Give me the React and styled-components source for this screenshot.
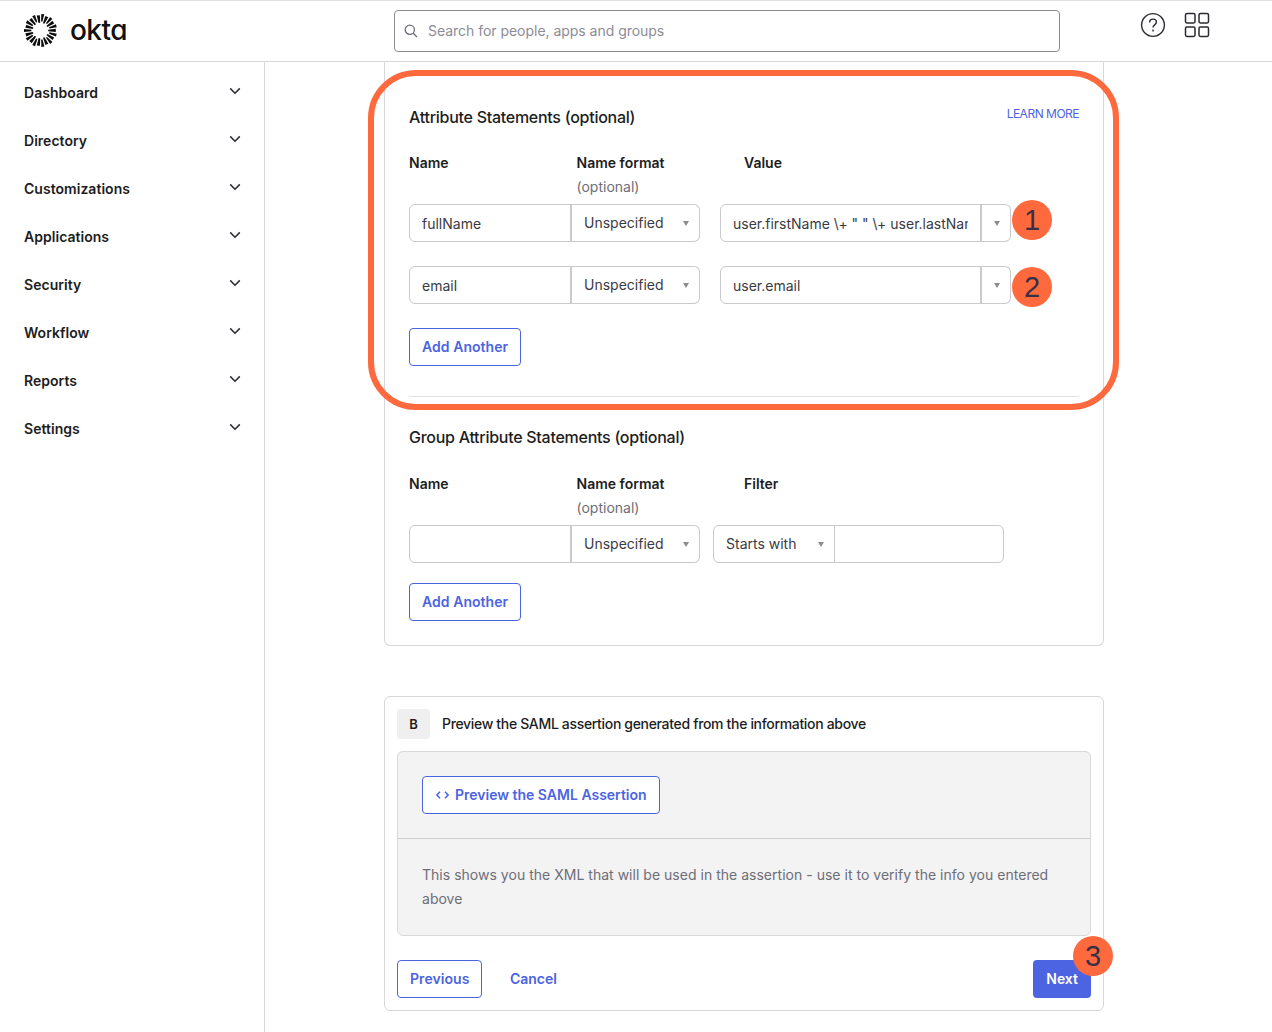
import React from "react";
import styled, { createGlobalStyle } from "styled-components";

const Global = createGlobalStyle`
  html, body { margin: 0; padding: 0; background: #fff; }
  body { font-family: Inter, "Liberation Sans", sans-serif; color: #1d1d21; font-size: 14px; overflow: hidden; }
  * { box-sizing: border-box; }
`;

const Page = styled.div`
  position: relative;
  width: 1272px;
  height: 1032px;
  overflow: hidden;
  border-top: 1px solid #e1e1e1;
`;
const Header = styled.header`
  height: 61px;
  border-bottom: 1px solid #d7d7dc;
  display: flex;
  align-items: center;
  position: relative;
`;
const Brand = styled.div`
  width: 394px;
  padding-left: 24px;
  display: flex;
  align-items: center;
  gap: 13px;
  margin-top: -1px;
`;
const Wordmark = styled.span`
  font-family: Inter, sans-serif;
  font-size: 28px;
  font-weight: 500;
  letter-spacing: -0.55px;
  color: #111;
  line-height: 30px;
  margin-top: -2px;
  font-feature-settings: "cv11";
`;
const SearchBox = styled.div`
  width: 666px;
  height: 42px;
  border: 1px solid #8c8c96;
  border-radius: 4px;
  display: flex;
  align-items: center;
  padding-left: 9px;
  gap: 10px;
  color: #8c8c96;
  font-size: 14px;
  letter-spacing: -0.03px;
  span { margin-top: -2px; }
`;
const HeaderIcons = styled.div`
  display: flex;
  align-items: center;
  gap: 18px;
  margin-left: 80px;
  margin-top: -12px;
`;
const Body = styled.div`
  display: flex;
  height: 970px;
`;
const Sidebar = styled.nav`
  width: 265px;
  flex: none;
  border-right: 1px solid #d7d7dc;
  padding: 6px 23px 0 24px;
`;
const NavItem = styled.div`
  height: 48px;
  display: flex;
  align-items: center;
  justify-content: space-between;
  font-size: 14px;
  font-weight: 600;
  letter-spacing: 0.03px;
  color: #1d1d21;
  svg { margin-top: -2px; }
`;
const Main = styled.main`
  flex: 1;
  padding-left: 119px;
  width: 720px;
`;
const TopCard = styled.section`
  width: 720px;
  height: 584px;
  border: 1px solid #d7d7dc;
  border-top: none;
  border-radius: 0 0 6px 6px;
  padding: 0 24px;
  position: relative;
`;
const SectionHead = styled.div`
  display: flex;
  justify-content: space-between;
  align-items: flex-start;
  padding-top: ${(p) => p.$top}px;
`;
const SectionTitle = styled.h2`
  margin: 0;
  font-size: 16px;
  line-height: 20px;
  font-weight: 550;
  letter-spacing: -0.27px;
  color: #1d1d21;
`;
const LearnMore = styled.a`
  margin-top: -1px;
  font-size: 12px;
  line-height: 16px;
  letter-spacing: -0.5px;
  color: #4c64e1;
`;
const Labels = styled.div`
  display: grid;
  grid-template-columns: 167.5px 167.5px 1fr;
  margin-top: ${(p) => p.$top}px;
  height: 51px;
  font-size: 14px;
  line-height: 20px;
  font-weight: 600;
  color: #1d1d21;
`;
const Opt = styled.div`
  margin-top: 4px;
  font-weight: 400;
  color: #6e6e78;
`;
const Row = styled.div`
  display: flex;
  height: 38px;
  margin-top: ${(p) => p.$top}px;
`;
const Field = styled.div`
  width: ${(p) => p.$w}px;
  height: 38px;
  flex: none;
  background: #fff;
  border: 1px solid #c9c9ce;
  border-radius: ${(p) => p.$r};
  margin-left: ${(p) => p.$ml || 0}px;
  padding: 1px 0 0 12px;
  display: flex;
  align-items: center;
  justify-content: space-between;
  font-size: 14px;
  line-height: 20px;
  color: #3a3a42;
  overflow: hidden;
  white-space: nowrap;
`;
const SelectField = styled(Field)`
  padding-top: 0;
  border-left-width: ${(p) => p.$lw || 1}px;
`;
const Clip = styled.span`
  display: block;
  width: ${(p) => p.$w}px;
  overflow: hidden;
`;
const Caret = styled.i`
  width: 0;
  height: 0;
  margin-right: ${(p) => p.$mr}px;
  margin-left: ${(p) => p.$ml || 0}px;
  margin-top: 1px;
  border-left: 3.5px solid transparent;
  border-right: 3.5px solid transparent;
  border-top: 5px solid #8c8c8c;
`;
const SelectText = styled.span`
  margin-top: -1px;
`;
const CaretBox = styled.div`
  width: 31px;
  height: 38px;
  flex: none;
  border: 1px solid #c9c9ce;
  border-left-width: 2px;
  border-radius: 0 6px 6px 0;
  margin-left: -1px;
  display: flex;
  align-items: center;
  justify-content: center;
`;
const OutlineButton = styled.button`
  height: 38px;
  padding: 0 12px;
  margin-top: ${(p) => p.$top || 0}px;
  display: inline-flex;
  align-items: center;
  gap: 6px;
  background: #fff;
  border: 1px solid #4c64e1;
  border-radius: 4px;
  color: #4c64e1;
  font: 600 14px/20px Inter, sans-serif;
  letter-spacing: 0.05px;
`;
const PreviewButton = styled(OutlineButton)`
  padding: 0 12px 0 13px;
  letter-spacing: 0;
`;
const Divider = styled.div`
  height: 1px;
  background: #e1e1e4;
  margin-top: 30px;
`;
const SecondCard = styled.section`
  width: 720px;
  height: 315px;
  margin-top: 50px;
  border: 1px solid #d7d7dc;
  border-radius: 6px;
  padding: 12px;
`;
const StepHead = styled.div`
  display: flex;
  align-items: center;
  gap: 12px;
  height: 30px;
`;
const StepBadge = styled.div`
  width: 33px;
  height: 30px;
  background: #efefef;
  border-radius: 4px;
  display: flex;
  align-items: center;
  justify-content: center;
  font-weight: 600;
  font-size: 13px;
`;
const StepTitle = styled.div`
  font-size: 14px;
  font-weight: 550;
  letter-spacing: -0.33px;
  margin-top: -2px;
  color: #1d1d21;
`;
const Panel = styled.div`
  margin-top: 12px;
  height: 185px;
  background: #f3f3f3;
  border: 1px solid #d7d7dc;
  border-radius: 6px;
`;
const PanelTop = styled.div`
  height: 87px;
  padding: 24px;
  border-bottom: 1px solid #d0d0d4;
`;
const PanelText = styled.p`
  margin: 0;
  padding: 24px 24px 0;
  font-size: 14px;
  line-height: 24px;
  letter-spacing: 0.02px;
  color: #6e6e78;
`;
const Footer = styled.div`
  display: flex;
  align-items: center;
  margin-top: 24px;
`;
const TextLink = styled.a`
  margin: -2px 0 0 27.5px;
  font-weight: 600;
  font-size: 14px;
  color: #4c64e1;
`;
const Primary = styled.button`
  margin-left: auto;
  height: 38px;
  padding: 0 13px;
  border: none;
  border-radius: 4px;
  background: #4c64e1;
  color: #fff;
  font: 600 14px/20px Inter, sans-serif;
`;
const Highlight = styled.div`
  position: absolute;
  left: 368px;
  top: 69px;
  width: 751px;
  height: 340px;
  border: 6px solid #ff693e;
  border-radius: 48px;
  pointer-events: none;
`;
const Marker = styled.div`
  position: absolute;
  left: ${(p) => p.$x}px;
  top: ${(p) => p.$y}px;
  width: 40px;
  height: 40px;
  border-radius: 50%;
  background: #ff693e;
  color: #3a3045;
  font: 400 29px/40px "Liberation Sans", sans-serif;
  text-align: center;
`;

const rays = Array.from({ length: 22 }, (_, i) => (i * 360) / 22);
const OktaMark = () => (
  <svg width="33" height="33" viewBox="0 0 33 33" aria-hidden="true">
    {rays.map((a, i) => (
      <path
        key={a}
        d={i % 2 ? "M14.9 1.2h3.2l-.8 7.6h-1.6z" : "M15 0h3l-.8 7.4h-1.4z"}
        fill="#0c0c0c"
        transform={`rotate(${a + 8} 16.5 16.5)`}
      />
    ))}
  </svg>
);
const SearchIcon = () => (
  <svg width="14" height="14" viewBox="0 0 14 14" fill="none" stroke="#6e6e78" strokeWidth="1.3">
    <circle cx="5.8" cy="5.8" r="4.6" />
    <path d="M9.2 9.2 13 13" />
  </svg>
);
const HelpIcon = () => (
  <svg width="26" height="26" viewBox="0 0 26 26" fill="none" stroke="#2a2a30" strokeWidth="1.4">
    <circle cx="13" cy="13" r="11.4" />
    <path d="M9.6 10.4c0-2 1.5-3.3 3.4-3.3s3.4 1.2 3.4 3c0 2.8-3.4 2.7-3.4 5.4" />
    <path d="M13 17.6v1.8" />
  </svg>
);
const GridIcon = () => (
  <svg width="26" height="26" viewBox="0 0 26 26" fill="none" stroke="#2a2a30" strokeWidth="1.5">
    <rect x="1.5" y="1.5" width="9.5" height="9.5" rx="1.4" />
    <rect x="15" y="1.5" width="9.5" height="9.5" rx="1.4" />
    <rect x="1.5" y="15" width="9.5" height="9.5" rx="1.4" />
    <rect x="15" y="15" width="9.5" height="9.5" rx="1.4" />
  </svg>
);
const Chevron = () => (
  <svg width="12" height="8" viewBox="0 0 12 8" fill="none" stroke="#2a2a30" strokeWidth="1.5">
    <path d="M1.2 1.4 6 6.2l4.8-4.8" />
  </svg>
);
const CodeIcon = () => (
  <svg width="13" height="8" viewBox="0 0 13 8" fill="none" stroke="#4c64e1" strokeWidth="1.5">
    <path d="M4 .8.9 4 4 7.2M9 .8 12.1 4 9 7.2" />
  </svg>
);

const NAV = ["Dashboard", "Directory", "Customizations", "Applications", "Security", "Workflow", "Reports", "Settings"];

const NameFormat = ({ value }) => (
  <SelectField $w={130} $ml={-1} $lw={2} $r="0 6px 6px 0">
    <SelectText>{value}</SelectText>
    <Caret $mr={10} />
  </SelectField>
);

export default function App() {
  return (
    <Page>
      <Global />
      <Header>
        <Brand>
          <OktaMark />
          <Wordmark>okta</Wordmark>
        </Brand>
        <SearchBox>
          <SearchIcon />
          <span>Search for people, apps and groups</span>
        </SearchBox>
        <HeaderIcons>
          <HelpIcon />
          <GridIcon />
        </HeaderIcons>
      </Header>
      <Body>
        <Sidebar>
          {NAV.map((n) => (
            <NavItem key={n}>
              {n}
              <Chevron />
            </NavItem>
          ))}
        </Sidebar>
        <Main>
          <TopCard>
            <SectionHead $top={45}>
              <SectionTitle>Attribute Statements (optional)</SectionTitle>
              <LearnMore>LEARN MORE</LearnMore>
            </SectionHead>
            <Labels $top={26}>
              <span>Name</span>
              <div>
                Name format
                <Opt>(optional)</Opt>
              </div>
              <span>Value</span>
            </Labels>
            <Row $top={0}>
              <Field $w={162} $r="6px 0 0 6px">fullName</Field>
              <NameFormat value="Unspecified" />
              <Field $w={261} $ml={20} $r="6px 0 0 6px"><Clip $w={235}>user.firstName \+ " " \+ user.lastName</Clip></Field>
              <CaretBox><Caret $mr={0} $ml={1} /></CaretBox>
            </Row>
            <Row $top={24}>
              <Field $w={162} $r="6px 0 0 6px">email</Field>
              <NameFormat value="Unspecified" />
              <Field $w={261} $ml={20} $r="6px 0 0 6px">user.email</Field>
              <CaretBox><Caret $mr={0} $ml={1} /></CaretBox>
            </Row>
            <OutlineButton $top={24}>Add Another</OutlineButton>
            <Divider />
            <SectionHead $top={30}>
              <SectionTitle>Group Attribute Statements (optional)</SectionTitle>
            </SectionHead>
            <Labels $top={27}>
              <span>Name</span>
              <div>
                Name format
                <Opt>(optional)</Opt>
              </div>
              <span>Filter</span>
            </Labels>
            <Row $top={0}>
              <Field $w={162} $r="6px 0 0 6px" />
              <NameFormat value="Unspecified" />
              <SelectField $w={122} $ml={13} $r="6px 0 0 6px">
                <SelectText>Starts with</SelectText>
                <Caret $mr={10} />
              </SelectField>
              <Field $w={170} $ml={-1} $r="0 6px 6px 0" />
            </Row>
            <OutlineButton $top={20}>Add Another</OutlineButton>
          </TopCard>
          <SecondCard>
            <StepHead>
              <StepBadge>B</StepBadge>
              <StepTitle>Preview the SAML assertion generated from the information above</StepTitle>
            </StepHead>
            <Panel>
              <PanelTop>
                <PreviewButton>
                  <CodeIcon />
                  Preview the SAML Assertion
                </PreviewButton>
              </PanelTop>
              <PanelText>
                This shows you the XML that will be used in the assertion - use it to verify the info you entered above
              </PanelText>
            </Panel>
            <Footer>
              <OutlineButton>Previous</OutlineButton>
              <TextLink>Cancel</TextLink>
              <Primary>Next</Primary>
            </Footer>
          </SecondCard>
        </Main>
      </Body>
      <Highlight />
      <Marker $x={1012} $y={199}>1</Marker>
      <Marker $x={1012} $y={266}>2</Marker>
      <Marker $x={1073} $y={935}>3</Marker>
    </Page>
  );
}
